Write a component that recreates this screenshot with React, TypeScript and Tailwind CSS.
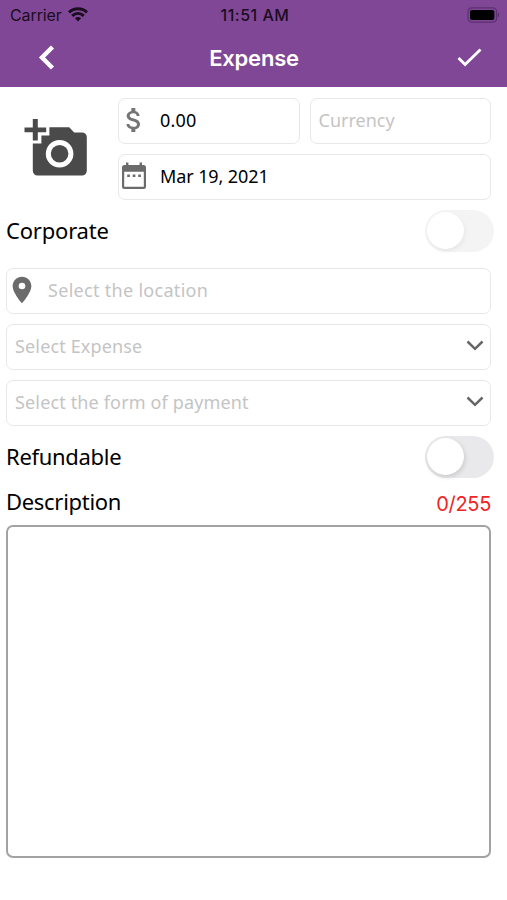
import React, { useState } from "react";
import clsx from "clsx";
import { MdAttachMoney, MdLocationOn } from "react-icons/md";

function WifiIcon() {
  return (
    <svg width="20" height="15" viewBox="0 0 20 15" fill="none" stroke="#1a0d20" strokeWidth="3">
      <path d="M1 5.4C6 .6 14 .6 19 5.4" />
      <path d="M4.2 8.8C7.6 5.7 12.4 5.7 15.8 8.8" />
      <path d="M10 14.4l-3.1-3.2c1.8-1.5 4.4-1.5 6.2 0z" fill="#1a0d20" stroke="none" />
    </svg>
  );
}

function BatteryIcon() {
  return (
    <svg width="33" height="16" viewBox="0 0 33 16">
      <rect x="1" y=".8" width="28.6" height="14.4" rx="4" fill="none" stroke="#5c3070" strokeWidth="1.2" />
      <rect x="3" y="2.9" width="24.4" height="10.2" rx="2" fill="#000" />
      <path d="M31 5.6c1.7.8 1.7 4 0 4.8z" fill="#5c3070" />
    </svg>
  );
}

function AddPhotoIcon() {
  return (
    <svg width="64" height="58" viewBox="0 0 64 58" fill="#4a4a4a">
      <path d="M8.8 0h5v8.4h8.4v4.8h-8.4v8.4h-5v-8.4H.5V8.4h8.3z" />
      <path
        fillRule="evenodd"
        d="M8.8 24.4h8.6v-8h8V8.2h19.8l5 5.2H58a4.8 4.8 0 0 1 4.8 4.8v33.6a4.8 4.8 0 0 1-4.8 4.8H13.6a4.8 4.8 0 0 1-4.8-4.8zM35.6 21a13.8 13.8 0 1 0 0 27.6 13.8 13.8 0 0 0 0-27.6z"
      />
      <circle cx="35.6" cy="34.8" r="8.8" />
    </svg>
  );
}

function CalendarIcon() {
  return (
    <svg width="26" height="28" viewBox="0 0 26 28" fill="#6b6b6b">
      <path
        fillRule="evenodd"
        d="M5 .5h2.4v2.6h11.2V.5H21v2.6h1.5a2.5 2.5 0 0 1 2.5 2.5v18.9a2.5 2.5 0 0 1-2.5 2.5h-19A2.5 2.5 0 0 1 1 24.5V5.6a2.5 2.5 0 0 1 2.5-2.5H5zM3.2 9.800v15h19.6v-15z"
      />
      <path d="M6.2 12.4h2.7v2.5H6.2zM11.7 12.4h2.7v2.5h-2.7zM17.2 12.4h2.7v2.5h-2.7z" />
    </svg>
  );
}

function ChevronDown() {
  return (
    <svg width="18" height="12" viewBox="0 0 18 12" fill="none" stroke="#666" strokeWidth="2.5">
      <path d="M1.5 1.5L9 8.800 16.5 1.5" />
    </svg>
  );
}

function Field({ className, children }: { className?: string; children: React.ReactNode }) {
  return (
    <div
      className={clsx(
        "h-[46px] flex items-center rounded-[7px] border-[1.5px] border-[#e8e8e8] pb-px text-lg",
        className
      )}
    >
      {children}
    </div>
  );
}

function Toggle({ disabled }: { disabled?: boolean }) {
  const [on, setOn] = useState(false);
  return (
    <button
      role="switch"
      aria-checked={on}
      disabled={disabled}
      onClick={() => setOn(!on)}
      className={clsx(
        "w-[69px] h-[42px] rounded-full p-[2px] flex items-center",
        on ? "justify-end" : "justify-start",
        disabled ? "bg-[#f4f4f4]" : "bg-[#e9e9eb]"
      )}
    >
      <span
        className={clsx(
          "size-[37px] rounded-full bg-white",
          disabled ? "shadow-[1px_2px_5px_rgba(0,0,0,0.06)]" : "shadow-[1px_2px_5px_rgba(0,0,0,0.14)]"
        )}
      />
    </button>
  );
}

export default function App() {
  const [description, setDescription] = useState("");

  return (
    <div className="w-[507px] h-[900px] flex flex-col bg-white text-black font-['Noto_Sans',sans-serif]">
      <header className="h-[87px] bg-[#804797] font-['Inter',sans-serif]">
        <div className="h-7 pt-px grid grid-cols-3 items-center pl-[10px] pr-[7px] text-[#1a0d20]">
          <div className="flex items-center gap-[6px] text-base leading-none tracking-[-0.1px]">
            Carrier
            <WifiIcon />
          </div>
          <span className="text-center text-base leading-none font-medium tracking-[0.5px] whitespace-nowrap">
            11:51 AM
          </span>
          <span className="flex justify-end">
            <BatteryIcon />
          </span>
        </div>
        <div className="h-[59px] grid grid-cols-[1fr_auto_1fr] items-center pl-[38px] pr-[25px]">
          <button aria-label="Back" className="justify-self-start">
            <svg width="17" height="26" viewBox="0 0 17 26" fill="none" stroke="#fff" strokeWidth="4.4">
              <path d="M14.5 2L4 12.5 14.5 23" />
            </svg>
          </button>
          <h1 className="-ml-[12px] pt-px text-center text-[22px] font-semibold tracking-[-0.2px] text-white">
            Expense
          </h1>
          <button aria-label="Save" className="justify-self-end">
            <svg width="25" height="20" viewBox="0 0 25 20" fill="none" stroke="#fff" strokeWidth="2.8">
              <path d="M1.5 10l6.6 6.6L23.5 1.5" />
            </svg>
          </button>
        </div>
      </header>

      <main className="pl-[6px] pr-4 pt-[10.5px] flex flex-col">
        <div className="flex">
          <button aria-label="Add photo" className="w-[112px] pl-[18px] pt-[21px] flex items-start">
            <AddPhotoIcon />
          </button>
          <div className="flex-1 grid grid-cols-2 gap-[10px]">
            <Field>
              <MdAttachMoney size={32} color="#757575" className="-ml-px" />
              <span className="ml-[10px] tracking-[0.2px]">0.00</span>
            </Field>
            <Field className="pl-2 text-[#c4c4c4]">Currency</Field>
            <Field className="col-span-2">
              <span className="ml-[2px]">
                <CalendarIcon />
              </span>
              <span className="ml-[13px] tracking-[-0.1px]">Mar 19, 2021</span>
            </Field>
          </div>
        </div>

        <div className="h-[68px] pb-[6px] -mr-[3px] flex items-center justify-between text-[22px] tracking-[-0.2px]">
          Corporate
          <Toggle disabled />
        </div>

        <div className="flex flex-col gap-[10px] text-[#c4c4c4]">
          <Field>
            <MdLocationOn size={32} color="#6b6b6b" className="-ml-px" />
            <span className="ml-[10px] tracking-[0.3px]">Select the location</span>
          </Field>
          <Field className="justify-between pl-2 pr-[6px] tracking-[0.15px]">
            Select Expense
            <ChevronDown />
          </Field>
          <Field className="justify-between pl-2 pr-[6px] tracking-[0.15px]">
            Select the form of payment
            <ChevronDown />
          </Field>
        </div>

        <div className="h-[62px] -mr-[3px] flex items-center justify-between text-[22px] tracking-[-0.3px]">
          Refundable
          <Toggle />
        </div>
        <div className="h-[37px] pb-[10px] flex items-center justify-between text-[22px] leading-7 tracking-[-0.3px]">
          Description
          <span className="pt-[5px] font-['Inter',sans-serif] text-xl text-[#ee2525]">
            {description.length}/255
          </span>
        </div>
        <textarea
          aria-label="Description"
          maxLength={255}
          value={description}
          onChange={(e) => setDescription(e.target.value)}
          className="h-[333px] w-full resize-none rounded-[7px] border-2 border-[#a3a3a3] p-2 text-lg outline-none"
        />
      </main>
    </div>
  );
}
